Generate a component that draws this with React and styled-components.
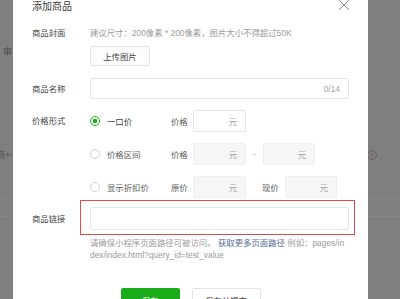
import React from "react";
import styled, { createGlobalStyle } from "styled-components";

const GlobalStyle = createGlobalStyle`
  html, body {
    margin: 0;
    padding: 0;
  }
  body {
    font-family: "Liberation Sans", "Noto Sans CJK SC", sans-serif;
  }
`;

const Screen = styled.div`
  position: relative;
  width: 400px;
  height: 299px;
  overflow: hidden;
  background: #7f7f7f;
`;

/* page behind the mask */
const Backdrop = styled.div`
  display: flex;
  flex-direction: column;
  color: #4e4e4e;
  font-size: 9px;
`;

const BackRow = styled.div`
  display: flex;
  justify-content: space-between;
  align-items: center;
  height: ${(p) => p.$h}px;
  margin-top: ${(p) => p.$mt || 0}px;
  border-bottom: ${(p) => (p.$line ? "1px solid #868686" : "none")};
  box-sizing: border-box;
`;

const BackText = styled.span`
  margin-left: ${(p) => p.$ml}px;
  line-height: 12px;
  white-space: nowrap;
`;

const HelpIcon = styled.span`
  display: flex;
  align-items: center;
  justify-content: center;
  width: 10px;
  height: 10px;
  margin-right: 23px;
  border: 1px solid #6f5c5c;
  border-radius: 50%;
  box-sizing: border-box;
  color: #6f5c5c;
  font-size: 7px;
  line-height: 1;
`;

/* dialog */
const Modal = styled.div`
  position: absolute;
  left: 13px;
  top: 0;
  width: 355px;
  height: 320px;
  background: #fff;
  display: flex;
  flex-direction: column;
  color: #444;
  font-size: 8.4px;
`;

const Header = styled.div`
  display: flex;
  justify-content: space-between;
  align-items: flex-start;
  height: 14px;
  padding: 0 18px 0 19px;
`;

const Title = styled.div`
  font-size: 10px;
  line-height: 14px;
  color: #3a3a3a;
`;

const Close = styled.svg`
  margin-top: -1px;
  display: block;
`;

const Form = styled.div`
  display: flex;
  flex-direction: column;
  padding: 0 19px;
`;

const Field = styled.div`
  position: relative;
  display: flex;
  align-items: ${(p) => p.$align || "flex-start"};
  margin-top: ${(p) => p.$mt}px;
`;

const Label = styled.div`
  width: 58px;
  flex: none;
  line-height: ${(p) => p.$lh || 12}px;
`;

const Body = styled.div`
  flex: 1;
  min-width: 0;
  display: flex;
  flex-direction: column;
  gap: ${(p) => p.$gap || 0}px;
`;

const Hint = styled.div`
  line-height: 12px;
  color: #9a9a9a;
  white-space: nowrap;
`;

const UploadButton = styled.div`
  display: flex;
  align-items: center;
  justify-content: center;
  width: 60px;
  height: 20px;
  margin-top: 7px;
  border: 1px solid #e2e2e2;
  border-radius: 2px;
  background: #fdfdfd;
  box-sizing: border-box;
`;

const Input = styled.div`
  display: flex;
  align-items: center;
  justify-content: flex-end;
  width: ${(p) => (p.$w ? `${p.$w}px` : "auto")};
  height: ${(p) => p.$h || 22}px;
  padding-right: 8px;
  border: 1px solid ${(p) => (p.$disabled ? "#efefef" : "#e4e4e4")};
  border-radius: 2px;
  background: ${(p) => (p.$disabled ? "#f6f6f6" : "#fff")};
  box-sizing: border-box;
  color: #a3a3a3;
  flex: none;
`;

const PriceRow = styled.div`
  display: flex;
  align-items: center;
  height: 22px;
`;

const Option = styled.div`
  display: flex;
  align-items: center;
  gap: 7px;
  width: 81px;
  flex: none;
  color: ${(p) => (p.$checked ? "#3a3a3a" : "#5a5a5a")};
`;

const Radio = styled.span`
  width: 10px;
  height: 10px;
  border-radius: 50%;
  box-sizing: border-box;
  flex: none;
  border: ${(p) => (p.$checked ? "1.6px solid #1aad19" : "1px solid #d2d2d2")};
  background: ${(p) =>
    p.$checked
      ? "radial-gradient(circle, #1aad19 0 2px, #fff 2.6px)"
      : "#fff"};
`;

const InlineLabel = styled.span`
  width: ${(p) => p.$w}px;
  margin-left: ${(p) => p.$ml || 0}px;
  flex: none;
  color: #5a5a5a;
  white-space: nowrap;
`;

const Dash = styled.span`
  width: 3px;
  margin: 0 7px;
  color: #b0b0b0;
  text-align: center;
`;

const Highlight = styled.div`
  position: absolute;
  left: 48px;
  right: -6px;
  top: -7px;
  bottom: -5px;
  border: 1.6px solid #e34b48;
  pointer-events: none;
`;

const Help = styled.div`
  margin: 7px 4px 0 58px;
  line-height: 12px;
  color: #9a9a9a;
  word-break: break-all;
`;

const Link = styled.span`
  color: #576b95;
`;

const Footer = styled.div`
  display: flex;
  justify-content: center;
  gap: 12px;
  margin-top: 27px;
`;

const Button = styled.div`
  display: flex;
  align-items: center;
  justify-content: center;
  width: ${(p) => p.$w}px;
  height: 24px;
  border-radius: 2px;
  box-sizing: border-box;
  background: ${(p) => (p.$primary ? "#1aad19" : "#fff")};
  border: 1px solid ${(p) => (p.$primary ? "#1aad19" : "#e2e2e2")};
  color: ${(p) => (p.$primary ? "#fff" : "#3a3a3a")};
`;

export default function App() {
  return (
    <>
      <GlobalStyle />
      <Screen>
        <Backdrop>
          <BackRow $h={14} $mt={45}>
            <BackText $ml={3}>审</BackText>
          </BackRow>
          <BackRow $h={14} $mt={89}>
            <BackText $ml={-4}>商+·</BackText>
            <HelpIcon>?</HelpIcon>
          </BackRow>
          <BackRow $h={37} $line />
          <BackRow $h={18} $line />
        </Backdrop>

        <Modal>
          <Header>
            <Title>添加商品</Title>
            <Close width="12" height="12" viewBox="0 0 12 12">
              <path d="M1 1 L11 11 M11 1 L1 11" stroke="#8c8c8c" strokeWidth="1" fill="none" />
            </Close>
          </Header>

          <Form>
            <Field $mt={13}>
              <Label>商品封面</Label>
              <Body>
                <Hint>建议尺寸：200像素 * 200像素，图片大小不得超过50K</Hint>
                <UploadButton>上传图片</UploadButton>
              </Body>
            </Field>

            <Field $mt={12} $align="center">
              <Label>商品名称</Label>
              <Body>
                <Input $h={21}>0/14</Input>
              </Body>
            </Field>

            <Field $mt={11}>
              <Label $lh={22}>价格形式</Label>
              <Body $gap={11}>
                <PriceRow>
                  <Option $checked>
                    <Radio $checked />
                    一口价
                  </Option>
                  <InlineLabel $w={22}>价格</InlineLabel>
                  <Input $w={53}>元</Input>
                </PriceRow>
                <PriceRow>
                  <Option>
                    <Radio />
                    价格区间
                  </Option>
                  <InlineLabel $w={22}>价格</InlineLabel>
                  <Input $w={53} $disabled>元</Input>
                  <Dash>-</Dash>
                  <Input $w={52} $disabled>元</Input>
                </PriceRow>
                <PriceRow>
                  <Option>
                    <Radio />
                    显示折扣价
                  </Option>
                  <InlineLabel $w={22}>原价</InlineLabel>
                  <Input $w={53} $disabled>元</Input>
                  <InlineLabel $w={23} $ml={16}>现价</InlineLabel>
                  <Input $w={52} $disabled>元</Input>
                </PriceRow>
              </Body>
            </Field>

            <Field $mt={9} $align="center">
              <Label>商品链接</Label>
              <Body>
                <Input $h={23} />
              </Body>
              <Highlight />
            </Field>

            <Help>
              请确保小程序页面路径可被访问。 <Link>获取更多页面路径</Link> 例如：pages/index/index.html?query_id=test_value
            </Help>

            <Footer>
              <Button $primary $w={59}>保存</Button>
              <Button $w={69}>保存并提交</Button>
            </Footer>
          </Form>
        </Modal>
      </Screen>
    </>
  );
}
